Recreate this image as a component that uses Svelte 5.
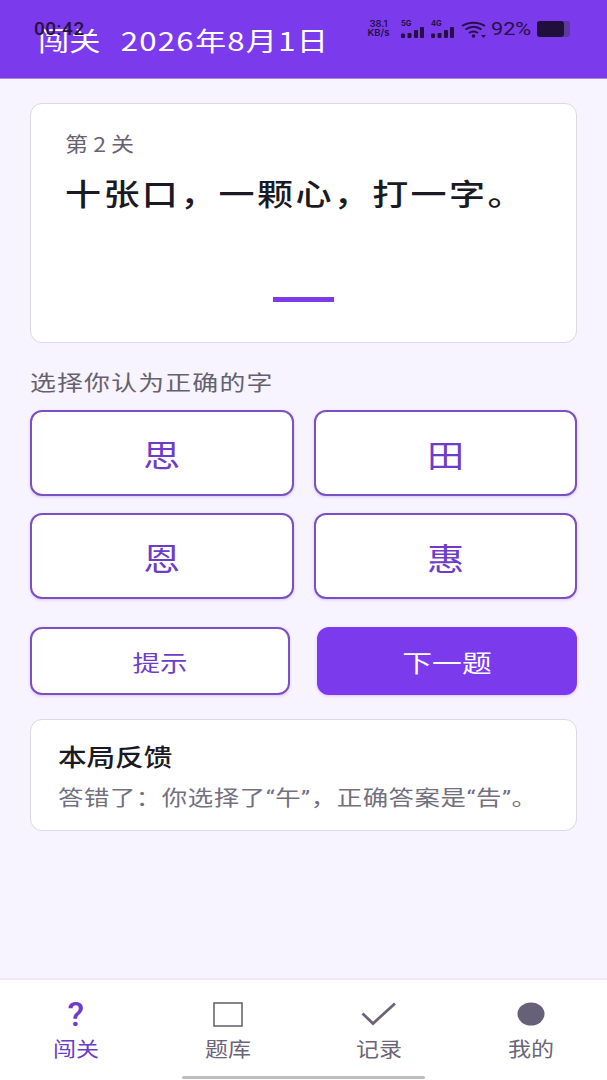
<script>
  let options = ['思', '田', '恩', '惠'];
  let tabs = [
    { label: '闯关', icon: 'help', active: true },
    { label: '题库', icon: 'square' },
    { label: '记录', icon: 'check' },
    { label: '我的', icon: 'dot' }
  ];
</script>

{#snippet bars()}
  <svg width="23" height="11" viewBox="0 0 23 11" fill="#241042">
    <rect x="0" y="6.500" width="4" height="4.500" rx="1"/>
    <rect x="6.500" y="6" width="4" height="5" rx="1"/>
    <rect x="13" y="3" width="4" height="8" rx="1"/>
    <rect x="19" y="0" width="4" height="11" rx="1"/>
  </svg>
{/snippet}

<div class="page">
  <header class="topbar">
    <h1><span class="name">闯关</span><span class="date">2026年8月1日</span></h1>
    <div class="status">
      <span class="time">00:42</span>
      <div class="status-right">
        <span class="speed"><b>38.1</b><b>KB/s</b></span>
        <span class="net"><i>5G</i>{@render bars()}</span>
        <span class="net"><i>4G</i>{@render bars()}</span>
        <svg class="wifi" width="25" height="17" viewBox="0 0 25 17" fill="none" stroke="#241042" stroke-width="2">
          <path d="M1 5C7.500 .5 17.500 .5 24 5"/>
          <path d="M4.500 8.500C9.500 5 15.500 5 20.500 8.500"/>
          <path d="M8 12c3-2 6-2 9 0"/>
          <circle cx="12.500" cy="15" r="1.800" fill="#241042" stroke="none"/>
          <path d="M20 14h5l-2.500 3z" fill="#241042" stroke="none"/>
        </svg>
        <span class="pct">92%</span>
        <span class="battery"><span class="level"></span></span>
      </div>
    </div>
  </header>

  <main class="content">
    <section class="card question">
      <div class="level-no">第 2 关</div>
      <div class="riddle">十张口，一颗心，打一字。</div>
      <div class="blank"></div>
    </section>

    <p class="prompt">选择你认为正确的字</p>
    <div class="options">
      {#each options as o}
        <button class="option"><span>{o}</span></button>
      {/each}
    </div>

    <div class="actions">
      <button class="hint"><span>提示</span></button>
      <button class="next"><span>下一题</span></button>
    </div>

    <section class="card feedback">
      <h2>本局反馈</h2>
      <p>答错了：你选择了“午”，正确答案是“告”。</p>
    </section>
  </main>

  <nav class="tabbar">
    {#each tabs as t}
      <div class="tab" class:active={t.active}>
        <span class="icon">
          {#if t.icon === 'help'}
            <span class="qmark">?</span>
          {:else if t.icon === 'square'}
            <svg width="30" height="25" viewBox="0 0 30 25"><rect x="1" y="1" width="28" height="23" fill="none" stroke="#6b6578" stroke-width="1.600"/></svg>
          {:else if t.icon === 'check'}
            <svg width="36" height="24" viewBox="0 0 36 24"><path d="M1.500 11.500l10.500 10L34 1.500" fill="none" stroke="#6b6578" stroke-width="2.800"/></svg>
          {:else}
            <svg width="28" height="24" viewBox="0 0 28 24"><ellipse cx="14" cy="12" rx="13.500" ry="11.500" fill="#676079"/></svg>
          {/if}
        </span>
        <span class="tab-label">{t.label}</span>
      </div>
    {/each}
    <div class="home-bar"></div>
  </nav>
</div>

<style>
  :global(body) {
    margin: 0;
    background: #f7f3ff;
    font-family: "Noto Sans CJK SC", "Noto Sans", sans-serif;
    text-spacing-trim: space-all;
  }

  .page {
    display: flex;
    flex-direction: column;
    height: 1080px;
    overflow: hidden;
    background: #f7f3ff;
  }

  .topbar {
    position: relative;
    height: 79px;
    flex: none;
    background: #7c3aed;
    border-bottom: 1px solid #a98bdc;
    box-sizing: border-box;
    padding: 20px 0 0 38px;
  }

  h1 {
    margin: 0;
    display: flex;
    font-size: 26px;
    line-height: 40px;
    font-weight: 400;
    color: #fff;
    transform: scaleX(1.2);
    transform-origin: left;
  }

  .date {
    margin-left: 17px;
    letter-spacing: 1px;
  }

  .status {
    position: absolute;
    left: 34px;
    right: 37px;
    top: 17px;
    display: flex;
    align-items: center;
    justify-content: space-between;
    color: #241042;
  }

  .time {
    font-family: Roboto, sans-serif;
    font-size: 19px;
    line-height: 24px;
    font-weight: 500;
    letter-spacing: 0.5px;
  }

  .status-right {
    display: flex;
    align-items: center;
  }

  .speed {
    display: flex;
    flex-direction: column;
    align-items: center;
    width: 25px;
    font-family: Inter, sans-serif;
    font-size: 9.500px;
    line-height: 9px;
    margin-top: -2px;
  }

  .speed b {
    font-weight: 600;
  }

  .net {
    position: relative;
    display: block;
    width: 23px;
    height: 17px;
    margin-left: 7px;
  }

  .speed + .net {
    margin-left: 10px;
  }

  .net i {
    position: absolute;
    left: 0;
    top: -1px;
    font-style: normal;
    font-weight: 700;
    font-family: Inter, sans-serif;
    font-size: 7.500px;
    line-height: 8px;
  }

  .net svg {
    position: absolute;
    left: 0;
    bottom: 0;
  }

  .wifi {
    margin-left: 7px;
  }

  .pct {
    width: 41px;
    margin-left: 5px;
    font-family: Roboto, sans-serif;
    font-size: 18px;
    line-height: 22px;
    transform: scaleX(1.200);
    transform-origin: left;
  }

  .battery {
    display: block;
    width: 33px;
    height: 16px;
    border-radius: 3px;
    background: #5a3a9a;
    margin-left: 5px;
  }

  .level {
    display: block;
    width: 27px;
    height: 16px;
    border-radius: 3px;
    background: #1f0f3a;
  }

  .content {
    flex: 1;
    padding: 24px 30px 0;
  }

  .card {
    box-sizing: border-box;
    background: #fff;
    border: 1.500px solid #dcd8e6;
    border-radius: 12px;
  }

  .question {
    height: 240px;
    padding: 25px 34px 0;
    display: flex;
    flex-direction: column;
  }

  .level-no {
    font-size: 20px;
    line-height: 30px;
    color: #666270;
    transform: scaleX(1.150);
    transform-origin: left;
  }

  .riddle {
    margin-top: 11px;
    font-size: 30px;
    line-height: 44px;
    font-weight: 500;
    letter-spacing: 2px;
    color: #1b1a24;
    white-space: nowrap;
    transform: scaleX(1.200);
    transform-origin: left;
  }

  .blank {
    width: 61px;
    height: 5px;
    background: #7c3aed;
    margin: 83px auto 0;
  }

  .prompt {
    margin: 23px 0 14px;
    font-size: 21px;
    line-height: 30px;
    letter-spacing: 1px;
    color: #66616f;
    transform: scaleX(1.230);
    transform-origin: left;
  }

  .options {
    display: grid;
    grid-template-columns: 1fr 1fr;
    gap: 17px 20px;
  }

  button {
    font-family: inherit;
    padding: 0;
    box-sizing: border-box;
    background: #fff;
    color: #6d3cc8;
    box-shadow: 0 1px 3px rgba(124, 58, 237, 0.25);
  }

  button span {
    display: inline-block;
  }

  .option {
    height: 86px;
    border: 2px solid #7a50c2;
    border-radius: 12px;
    font-size: 31px;
  }

  .option span {
    transform: scaleX(1.200);
  }

  .actions {
    display: grid;
    grid-template-columns: 1fr 1fr;
    gap: 27px;
    margin-top: 28px;
  }

  .hint, .next {
    height: 68px;
    border-radius: 12px;
    font-size: 22px;
  }

  .hint {
    border: 2px solid #7a50c2;
  }

  .hint span {
    transform: scaleX(1.250);
  }

  .next {
    border: none;
    background: #7c3aed;
    color: #fff;
    font-size: 24px;
  }

  .next span {
    transform: scaleX(1.240);
  }

  .feedback {
    margin-top: 24px;
    height: 112px;
    padding: 18px 27px 0;
  }

  h2 {
    margin: 0;
    font-size: 24px;
    line-height: 36px;
    font-weight: 500;
    color: #1b1a24;
    transform: scaleX(1.190);
    transform-origin: left;
  }

  .feedback p {
    margin: 8px 0 0;
    font-family: Roboto, "Noto Sans CJK SC", sans-serif;
    font-size: 21px;
    line-height: 32px;
    letter-spacing: 0.45px;
    color: #737080;
    white-space: nowrap;
    transform: scaleX(1.210);
    transform-origin: left;
  }

  .tabbar {
    position: relative;
    flex: none;
    height: 102px;
    box-sizing: border-box;
    background: #fff;
    border-top: 2px solid #ebe8f0;
    display: grid;
    grid-template-columns: repeat(4, 1fr);
  }

  .tab {
    display: flex;
    flex-direction: column;
    align-items: center;
    color: #6b6578;
    padding-top: 19px;
  }

  .tab.active {
    color: #6d3cc8;
  }

  .icon {
    height: 30px;
    display: flex;
    align-items: center;
    justify-content: center;
  }

  .qmark {
    font-family: Roboto, sans-serif;
    font-size: 34px;
    line-height: 30px;
    font-weight: 500;
  }

  .tab-label {
    margin-top: 6px;
    font-size: 20px;
    line-height: 28px;
    transform: scaleX(1.150);
  }

  .home-bar {
    position: absolute;
    left: 182px;
    bottom: 1px;
    width: 243px;
    height: 3px;
    border-radius: 2px;
    background: #bdbdbd;
  }
</style>
